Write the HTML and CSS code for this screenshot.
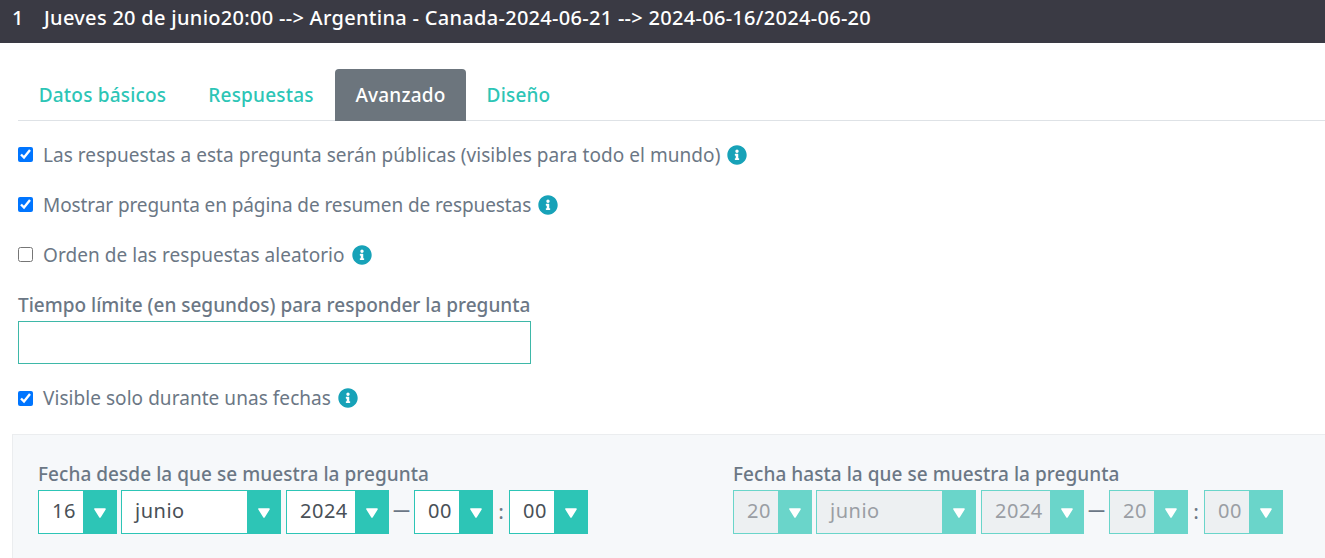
FILE: index.html
```html
<!DOCTYPE html>
<html lang="es">
<head>
<meta charset="utf-8">
<title>Pregunta</title>
<link rel="stylesheet" href="styles.css">
</head>
<body>
<svg class="defs" width="0" height="0"><symbol id="info" viewBox="0 0 512 512"><path fill="currentColor" d="M256 8C119.043 8 8 119.083 8 256c0 136.997 111.043 248 248 248s248-111.003 248-248C504 119.083 392.957 8 256 8zm0 110c23.196 0 42 18.804 42 42s-18.804 42-42 42-42-18.804-42-42 18.804-42 42-42zm56 254c0 6.627-5.373 12-12 12h-88c-6.627 0-12-5.373-12-12v-24c0-6.627 5.373-12 12-12h12v-64h-12c-6.627 0-12-5.373-12-12v-24c0-6.627 5.373-12 12-12h64c6.627 0 12 5.373 12 12v100h12c6.627 0 12 5.373 12 12v24z"/></symbol><symbol id="tri" viewBox="0 0 12 10"><path fill="#fff" stroke="#fff" stroke-width="1.6" stroke-linejoin="round" d="M1 1h10L6 9z"/></symbol></svg>
<header class="topbar"><span class="num">1</span><span>Jueves 20 de junio20:00 --&gt; Argentina - Canada-2024-06-21 --&gt; 2024-06-16/2024-06-20</span></header>
<main class="content">
  <nav class="tabs">
    <a class="tab t1">Datos básicos</a>
    <a class="tab t2">Respuestas</a>
    <a class="tab t3 active">Avanzado</a>
    <a class="tab t4">Diseño</a>
  </nav>
  <div class="check-row first"><input type="checkbox" checked><span>Las respuestas a esta pregunta serán públicas (visibles para todo el mundo)</span><svg class="info"><use href="#info"/></svg></div>
  <div class="check-row tight"><input type="checkbox" checked><span>Mostrar pregunta en página de resumen de respuestas</span><svg class="info"><use href="#info"/></svg></div>
  <div class="check-row"><input type="checkbox"><span>Orden de las respuestas aleatorio</span><svg class="info"><use href="#info"/></svg></div>
  <label class="field-label">Tiempo límite (en segundos) para responder la pregunta</label>
  <input class="text-input" type="text">
  <div class="check-row visible"><input type="checkbox" checked><span>Visible solo durante unas fechas</span><svg class="info"><use href="#info"/></svg></div>
  <section class="panel">
    <div class="date-group">
      <div class="date-label">Fecha desde la que se muestra la pregunta</div>
      <div class="date-row">
        <div class="sel w-sm"><span class="val">16</span><span class="arrow"><svg class="tri"><use href="#tri"/></svg></span></div>
        <div class="sel w-lg"><span class="val">junio</span><span class="arrow"><svg class="tri"><use href="#tri"/></svg></span></div>
        <div class="sel w-md"><span class="val">2024</span><span class="arrow"><svg class="tri"><use href="#tri"/></svg></span></div>
        <span class="dash">—</span>
        <div class="sel w-sm"><span class="val">00</span><span class="arrow"><svg class="tri"><use href="#tri"/></svg></span></div>
        <span class="colon">:</span>
        <div class="sel w-sm"><span class="val">00</span><span class="arrow"><svg class="tri"><use href="#tri"/></svg></span></div>
      </div>
    </div>
    <div class="date-group last">
      <div class="date-label">Fecha hasta la que se muestra la pregunta</div>
      <div class="date-row disabled">
        <div class="sel w-sm"><span class="val">20</span><span class="arrow"><svg class="tri"><use href="#tri"/></svg></span></div>
        <div class="sel w-lg"><span class="val">junio</span><span class="arrow"><svg class="tri"><use href="#tri"/></svg></span></div>
        <div class="sel w-md"><span class="val">2024</span><span class="arrow"><svg class="tri"><use href="#tri"/></svg></span></div>
        <span class="dash">—</span>
        <div class="sel w-sm"><span class="val">20</span><span class="arrow"><svg class="tri"><use href="#tri"/></svg></span></div>
        <span class="colon">:</span>
        <div class="sel w-sm"><span class="val">00</span><span class="arrow"><svg class="tri"><use href="#tri"/></svg></span></div>
      </div>
    </div>
  </section>
</main>
</body>
</html>
```
FILE: styles.css
```css
* { box-sizing: border-box; }
html, body { margin: 0; padding: 0; }
body { font-family: "Noto Sans", Roboto, sans-serif; font-size: 19px; color: #6b7785; background: #fff; overflow: hidden; height: 558px; }
.defs { display: block; height: 0; }
.topbar { height: 43px; background: #3a3a44; color: #fff; font-weight: 500; font-size: 20px; letter-spacing: .29px; display: flex; align-items: center; padding: 0 0 9px 12px; white-space: nowrap; }
.num { width: 32px; }
.content { padding-left: 18px; }
.tabs { display: flex; margin-top: 26px; height: 52px; border-bottom: 1px solid #dee2e6; }
.tab { height: 52px; display: flex; align-items: center; justify-content: center; color: #2dc5b6; font-weight: 500; letter-spacing: .2px; border-radius: 4px 4px 0 0; padding-bottom: 1px; }
.t1 { width: 169px; } .t2 { width: 148px; } .t3 { width: 131px; } .t4 { width: 105px; }
.tab.active { background: #6c757d; color: #fff; }
.check-row { display: flex; align-items: center; height: 27px; margin-top: 23px; letter-spacing: .05px; }
.check-row.first { margin-top: 21px; }
.check-row.tight { letter-spacing: -.09px; }
.check-row span { position: relative; top: -1px; }
.check-row input { width: 15px; height: 15px; margin: 0 10px 0 0; accent-color: #0075ff; flex: none; position: relative; top: -1px; }
.check-row.visible input { top: 0; }
.info { width: 20px; height: 20px; color: #17a2b8; margin-left: 7px; flex: none; position: relative; top: -1px; }
.field-label { display: block; font-weight: 500; margin-top: 23px; line-height: 26px; height: 26px; white-space: nowrap; }
.text-input { display: block; width: 513px; height: 43px; border: 1px solid #3eb8a8; background: #fff; margin-top: 3px; padding: 0 10px; outline: none; }
.check-row.visible { margin-top: 21px; }
.panel { margin: 22px 0 0 -6px; height: 124px; background: #f6f8fa; border: 1px solid #ebedef; border-width: 1px 0 0 1px; padding: 28px 0 0 25px; display: flex; }
.date-group { width: 695px; flex: none; }
.date-group.last { width: auto; flex: 1; min-width: 0; }
.date-label { font-weight: 500; height: 27px; line-height: 22px; letter-spacing: .05px; white-space: nowrap; }
.date-row { display: flex; align-items: center; gap: 4px; }
.sel { display: flex; height: 44px; border: 1px solid #2dc5b6; background: #fff; color: #495057; flex: none; }
.w-sm { width: 79px; } .w-lg { width: 160px; } .w-md { width: 103px; margin-left: 1px; }
.val { flex: 1; padding-left: 13px; font-size: 20px; letter-spacing: .5px; line-height: 39px; }
.arrow { width: 33px; background: #2dc5b6; display: flex; align-items: center; justify-content: center; }
.tri { width: 12px; height: 10px; overflow: visible; margin-top: 2px; }
.dash { width: 17px; text-align: center; font-size: 17px; font-weight: 600; line-height: 1; padding-bottom: 6px; color: #6b7785; }
.colon { width: 8px; text-align: center; color: #6b7785; font-weight: 500; line-height: 1; }
.disabled .sel { border-color: #6ad5ca; background: #edf0f2; color: #9a9ea4; }
.disabled .arrow { background: #6ad5ca; }
```
